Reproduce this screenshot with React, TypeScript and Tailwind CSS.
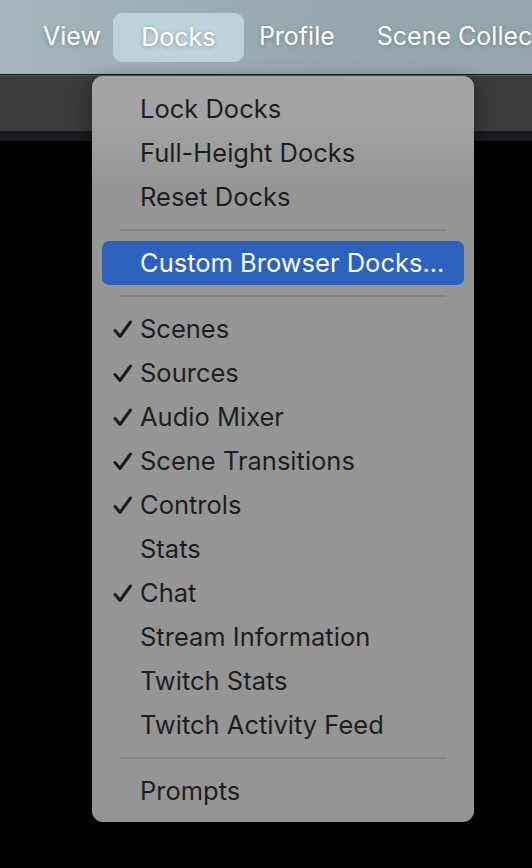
import { Fragment } from 'react';

type Item = { label: string; checked?: boolean; active?: boolean; sep?: boolean };

const items: Item[] = [
  { label: 'Lock Docks' },
  { label: 'Full-Height Docks' },
  { label: 'Reset Docks' },
  { label: '', sep: true },
  { label: 'Custom Browser Docks...', active: true },
  { label: '', sep: true },
  { label: 'Scenes', checked: true },
  { label: 'Sources', checked: true },
  { label: 'Audio Mixer', checked: true },
  { label: 'Scene Transitions', checked: true },
  { label: 'Controls', checked: true },
  { label: 'Stats' },
  { label: 'Chat', checked: true },
  { label: 'Stream Information' },
  { label: 'Twitch Stats' },
  { label: 'Twitch Activity Feed' },
  { label: '', sep: true },
  { label: 'Prompts' },
];

function Check() {
  return (
    <svg width="20" height="19" viewBox="0 0 20 19" className="absolute left-[11px] top-[13px]">
      <path
        d="M2 10.5 L7 16.5 L17.5 2"
        fill="none"
        stroke="#1c1c1c"
        strokeWidth="3"
        strokeLinecap="round"
        strokeLinejoin="round"
      />
    </svg>
  );
}

function DocksMenu() {
  return (
    <div className="absolute left-[92px] top-[76px] w-[382px] rounded-[11px] bg-[linear-gradient(to_bottom,#a5a5a5_0px,#a2a2a2_50px,#969696_110px,#959595_100%)] pt-[11px] pb-[9px] shadow-[0_6px_20px_rgba(0,0,0,0.45)]">
      {items.map((it, i) => (
        <Fragment key={i}>
          {it.sep ? (
            <div className="h-[22px] flex items-center px-[28px]">
              <div className="h-[2px] w-full bg-[#858585]" />
            </div>
          ) : (
            <div className="px-[10px]">
              <div
                className={`relative h-[44px] flex items-center pl-[38px] rounded-[7px] text-[25.5px] ${
                  it.active ? 'bg-[#2c61bd] text-white' : 'text-[#1e1e1e]'
                }`}
              >
                {it.checked && <Check />}
                <span>{it.label}</span>
              </div>
            </div>
          )}
        </Fragment>
      ))}
    </div>
  );
}

export default function App() {
  return (
    <div className="relative w-[532px] h-[868px] overflow-hidden bg-black font-['Inter','Liberation_Sans',sans-serif]">
      <div className="h-[74px] bg-[linear-gradient(to_right,#a3b6bb,#98abb1_50%,#93a6ac)] flex items-center text-[25px] text-white whitespace-nowrap [text-shadow:0_1px_4px_rgba(0,0,0,0.25)]">
        <div className="shrink-0 pl-[43px] pr-[12px]">View</div>
        <div className="shrink-0 h-[49px] w-[131px] mt-[1px] rounded-[9px] bg-[#bdd2d9] flex items-center justify-center">Docks</div>
        <div className="shrink-0 pl-[15px] pr-[42px]">Profile</div>
        <div className="shrink-0">Scene Collec</div>
      </div>
      <div className="h-[1px] bg-[#151515]" />
      <div className="h-[1px] bg-[#5a5a5a]" />
      <div className="h-[55px] bg-[#3b3b3b]" />
      <div className="h-[10px] bg-[#1b1b20]" />
      <DocksMenu />
    </div>
  );
}
